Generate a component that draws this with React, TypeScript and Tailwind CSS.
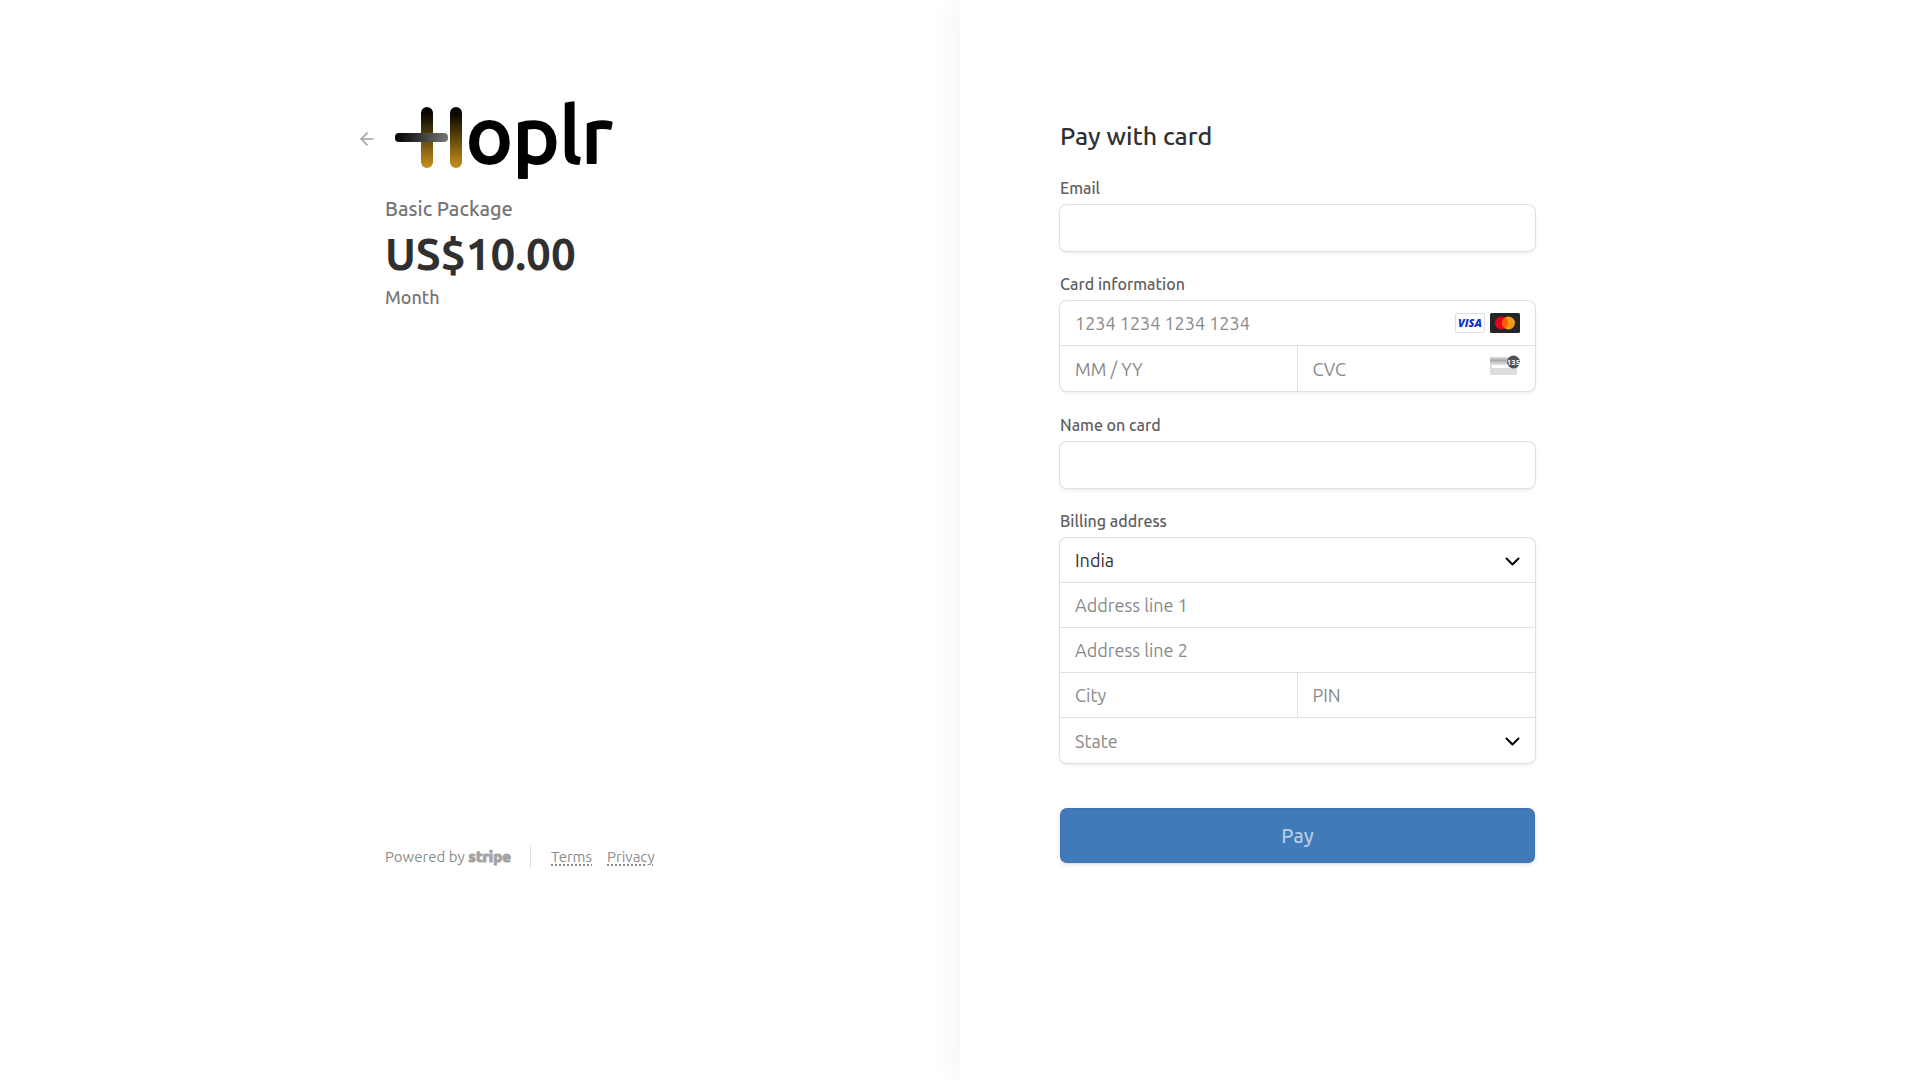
import type { ReactNode } from 'react';
import { ArrowLeft } from 'lucide-react';

const INPUT =
    'w-full min-w-0 flex-1 bg-transparent px-[15px] text-lg text-[#303030] outline-none placeholder:text-[#888] placeholder:opacity-100';
const BOX =
    'rounded-[7px] bg-white shadow-[0_0_0_1px_#e0e0e0,0_2px_4px_0_rgba(0,0,0,0.07),0_1px_2px_0_rgba(0,0,0,0.05)]';
const LABEL = 'mb-[5px] block text-base leading-6 font-medium text-[#5e5e5e]';
const ROW = 'flex h-[45px] items-center border-b border-[#e0e0e0]';
const LAST_ROW = 'flex h-[45px] items-center';

function HoplrLogo() {
    return (
        <svg className="overflow-visible" width="228" height="76" viewBox="0 0 228 76" role="img" aria-label="Hoplr">
            <defs>
                <linearGradient id="gold" x1="0" y1="0" x2="0" y2="1">
                    <stop offset="0" stopColor="#000" />
                    <stop offset="0.15" stopColor="#120d02" />
                    <stop offset="1" stopColor="#c8921b" />
                </linearGradient>
                <linearGradient id="bar" x1="0" y1="0" x2="1" y2="0">
                    <stop offset="0" stopColor="#000" />
                    <stop offset="1" stopColor="#777" />
                </linearGradient>
            </defs>
            <rect x="26" y="3" width="12" height="61" rx="6" fill="url(#gold)" />
            <rect x="55" y="3" width="12" height="61" rx="6" fill="url(#gold)" />
            <rect x="0" y="29" width="53" height="9" rx="4" fill="url(#bar)" />
            <text
                x="71"
                y="59"
                fontFamily="Ubuntu, Lato, sans-serif"
                fontSize="79"
                fontWeight="500"
                stroke="#000"
                strokeWidth="2"
                strokeLinejoin="round"
            >
                oplr
            </text>
        </svg>
    );
}

function VisaIcon() {
    return (
        <svg width="30" height="20" viewBox="0 0 30 20" role="img" aria-label="Visa">
            <rect x="0.5" y="0.5" width="29" height="19" rx="1.5" fill="#fff" stroke="#e0e0e0" />
            <text
                x="15"
                y="14"
                textAnchor="middle"
                fontFamily="'Open Sans', sans-serif"
                fontSize="11"
                fontWeight="800"
                fontStyle="italic"
                fill="#1434cb"
            >
                VISA
            </text>
        </svg>
    );
}

function MastercardIcon() {
    return (
        <svg width="30" height="20" viewBox="0 0 30 20" role="img" aria-label="Mastercard">
            <rect width="30" height="20" rx="1.5" fill="#252525" />
            <circle cx="11.5" cy="10" r="6.5" fill="#eb001b" />
            <circle cx="18.5" cy="10" r="6.5" fill="#f79e1b" fillOpacity="0.97" />
            <path d="M15 4.5a6.5 6.5 0 0 1 0 11a6.5 6.5 0 0 1 0-11z" fill="#ff5f00" />
        </svg>
    );
}

function CvcIcon() {
    return (
        <svg width="30" height="28" viewBox="0 0 30 28" aria-hidden="true">
            <defs>
                <linearGradient id="stripe" x1="0" y1="0" x2="0" y2="1">
                    <stop offset="0" stopColor="#ddd" />
                    <stop offset="0.5" stopColor="#aaa" />
                    <stop offset="1" stopColor="#ddd" />
                </linearGradient>
            </defs>
            <rect x="0" y="2" width="27" height="18" rx="1.5" fill="#ddd" />
            <rect x="0" y="2" width="27" height="7" fill="url(#stripe)" />
            <rect x="2" y="10" width="19" height="3" fill="#fff" />
            <circle cx="23.5" cy="7" r="6.5" fill="#525252" />
            <text
                x="23.5"
                y="10"
                textAnchor="middle"
                fontFamily="Ubuntu, 'Open Sans', sans-serif"
                fontSize="8"
                fontWeight="700"
                fill="#fff"
            >
                135
            </text>
        </svg>
    );
}

function SelectField({ label, placeholder, options }: { label: string; placeholder?: string; options: string[] }) {
    return (
        <div className="relative flex h-full w-full items-center">
            <select
                aria-label={label}
                defaultValue={placeholder ? '' : options[0]}
                className={`h-full w-full appearance-none bg-transparent px-[15px] text-lg outline-none ${placeholder ? 'text-[#888]' : 'text-[#303030]'}`}
            >
                {placeholder && <option value="">{placeholder}</option>}
                {options.map((option) => (
                    <option key={option} value={option}>
                        {option}
                    </option>
                ))}
            </select>
            <svg
                className="pointer-events-none absolute right-[15px] mt-0.5"
                width="15"
                height="9"
                viewBox="0 0 15 9"
                fill="none"
                stroke="#000"
                strokeWidth="2"
                aria-hidden="true"
            >
                <path d="M1.5 1.5l6 6 6-6" strokeLinecap="round" strokeLinejoin="round" />
            </svg>
        </div>
    );
}

function Group({ title, children }: { title: string; children: ReactNode }) {
    return (
        <fieldset className="mb-[22px]">
            <legend className={LABEL}>{title}</legend>
            <div className={BOX}>{children}</div>
        </fieldset>
    );
}

function TextField({ id, label, type = 'text' }: { id: string; label: string; type?: string }) {
    return (
        <div className="mb-[21px]">
            <label htmlFor={id} className={LABEL}>
                {label}
            </label>
            <div className={`flex h-[46px] ${BOX}`}>
                <input id={id} type={type} className={INPUT} />
            </div>
        </div>
    );
}

function Summary() {
    return (
        <section className="flex items-start justify-end pt-[104px]">
            <div className="flex min-h-[764px] w-full max-w-[575px] flex-col justify-between">
                <div>
                    <div className="-ml-7 flex items-center gap-[18px]">
                        <a href="#" aria-label="Back" className="pb-1.5 text-[#a3a3a3]">
                            <ArrowLeft size={20} strokeWidth={2} />
                        </a>
                        <HoplrLogo />
                    </div>
                    <p className="mt-[15px] text-xl leading-7 font-medium text-[#757575]">Basic Package</p>
                    <h1 className="mt-1 text-[44px] leading-[54px] font-bold text-[#303030]">US$10.00</h1>
                    <p className="mt-1 text-lg leading-6 font-medium text-[#757575]">Month</p>
                </div>
                <footer className="flex items-center text-[15px] leading-[22px] text-[#8c8c8c]">
                    <a href="#" className="flex items-center gap-1 border-r border-[#e0e0e0] pr-[19px]">
                        Powered by
                        <span className="font-extrabold text-[#a3a3a3] [-webkit-text-stroke:1px_#a3a3a3]">stripe</span>
                    </a>
                    <a href="#" className="ml-5 underline decoration-dotted decoration-2 underline-offset-2">
                        Terms
                    </a>
                    <a href="#" className="ml-[15px] underline decoration-dotted decoration-2 underline-offset-2">
                        Privacy
                    </a>
                </footer>
            </div>
        </section>
    );
}

function PaymentForm() {
    return (
        <section className="bg-white pt-[120px] pl-[100px] shadow-[-8px_0_24px_0_rgba(0,0,0,0.035)]">
            <form className="max-w-[475px] pb-10" onSubmit={(e) => e.preventDefault()}>
                <h2 className="mb-6 text-[25px] leading-8 font-medium text-[#303030]">Pay with card</h2>

                <TextField id="email" label="Email" type="email" />

                <Group title="Card information">
                    <div className={`${ROW} pr-[15px]`}>
                        <input aria-label="Card number" placeholder="1234 1234 1234 1234" className={INPUT} />
                        <div className="flex gap-[5px]">
                            <VisaIcon />
                            <MastercardIcon />
                        </div>
                    </div>
                    <div className="grid grid-cols-2">
                        <div className={`${LAST_ROW} border-r border-[#e0e0e0]`}>
                            <input aria-label="Expiry date" placeholder="MM / YY" className={INPUT} />
                        </div>
                        <div className={`${LAST_ROW} pr-[15px]`}>
                            <input aria-label="CVC" placeholder="CVC" className={INPUT} />
                            <CvcIcon />
                        </div>
                    </div>
                </Group>

                <TextField id="name" label="Name on card" />

                <Group title="Billing address">
                    <div className={ROW}>
                        <SelectField label="Country" options={['India']} />
                    </div>
                    <div className={ROW}>
                        <input aria-label="Address line 1" placeholder="Address line 1" className={INPUT} />
                    </div>
                    <div className={ROW}>
                        <input aria-label="Address line 2" placeholder="Address line 2" className={INPUT} />
                    </div>
                    <div className="grid grid-cols-2">
                        <div className={`${ROW} border-r`}>
                            <input aria-label="City" placeholder="City" className={INPUT} />
                        </div>
                        <div className={ROW}>
                            <input aria-label="PIN" placeholder="PIN" className={INPUT} />
                        </div>
                    </div>
                    <div className={LAST_ROW}>
                        <SelectField label="State" placeholder="State" options={['Goa', 'Kerala', 'Punjab']} />
                    </div>
                </Group>

                <button
                    type="submit"
                    className="mt-[23px] h-[55px] w-full rounded-[7px] bg-[#417ab8] text-xl font-medium text-[#b3cae3] shadow-[inset_0_0_0_1px_rgba(50,50,93,0.1),0_2px_5px_0_rgba(50,50,93,0.1),0_1px_2px_0_rgba(0,0,0,0.07)]"
                >
                    Pay
                </button>
            </form>
        </section>
    );
}

export default function App() {
    return (
        <main className="grid min-h-screen grid-cols-2 bg-white font-['Ubuntu','Noto_Sans',sans-serif]">
            <Summary />
            <PaymentForm />
        </main>
    );
}
